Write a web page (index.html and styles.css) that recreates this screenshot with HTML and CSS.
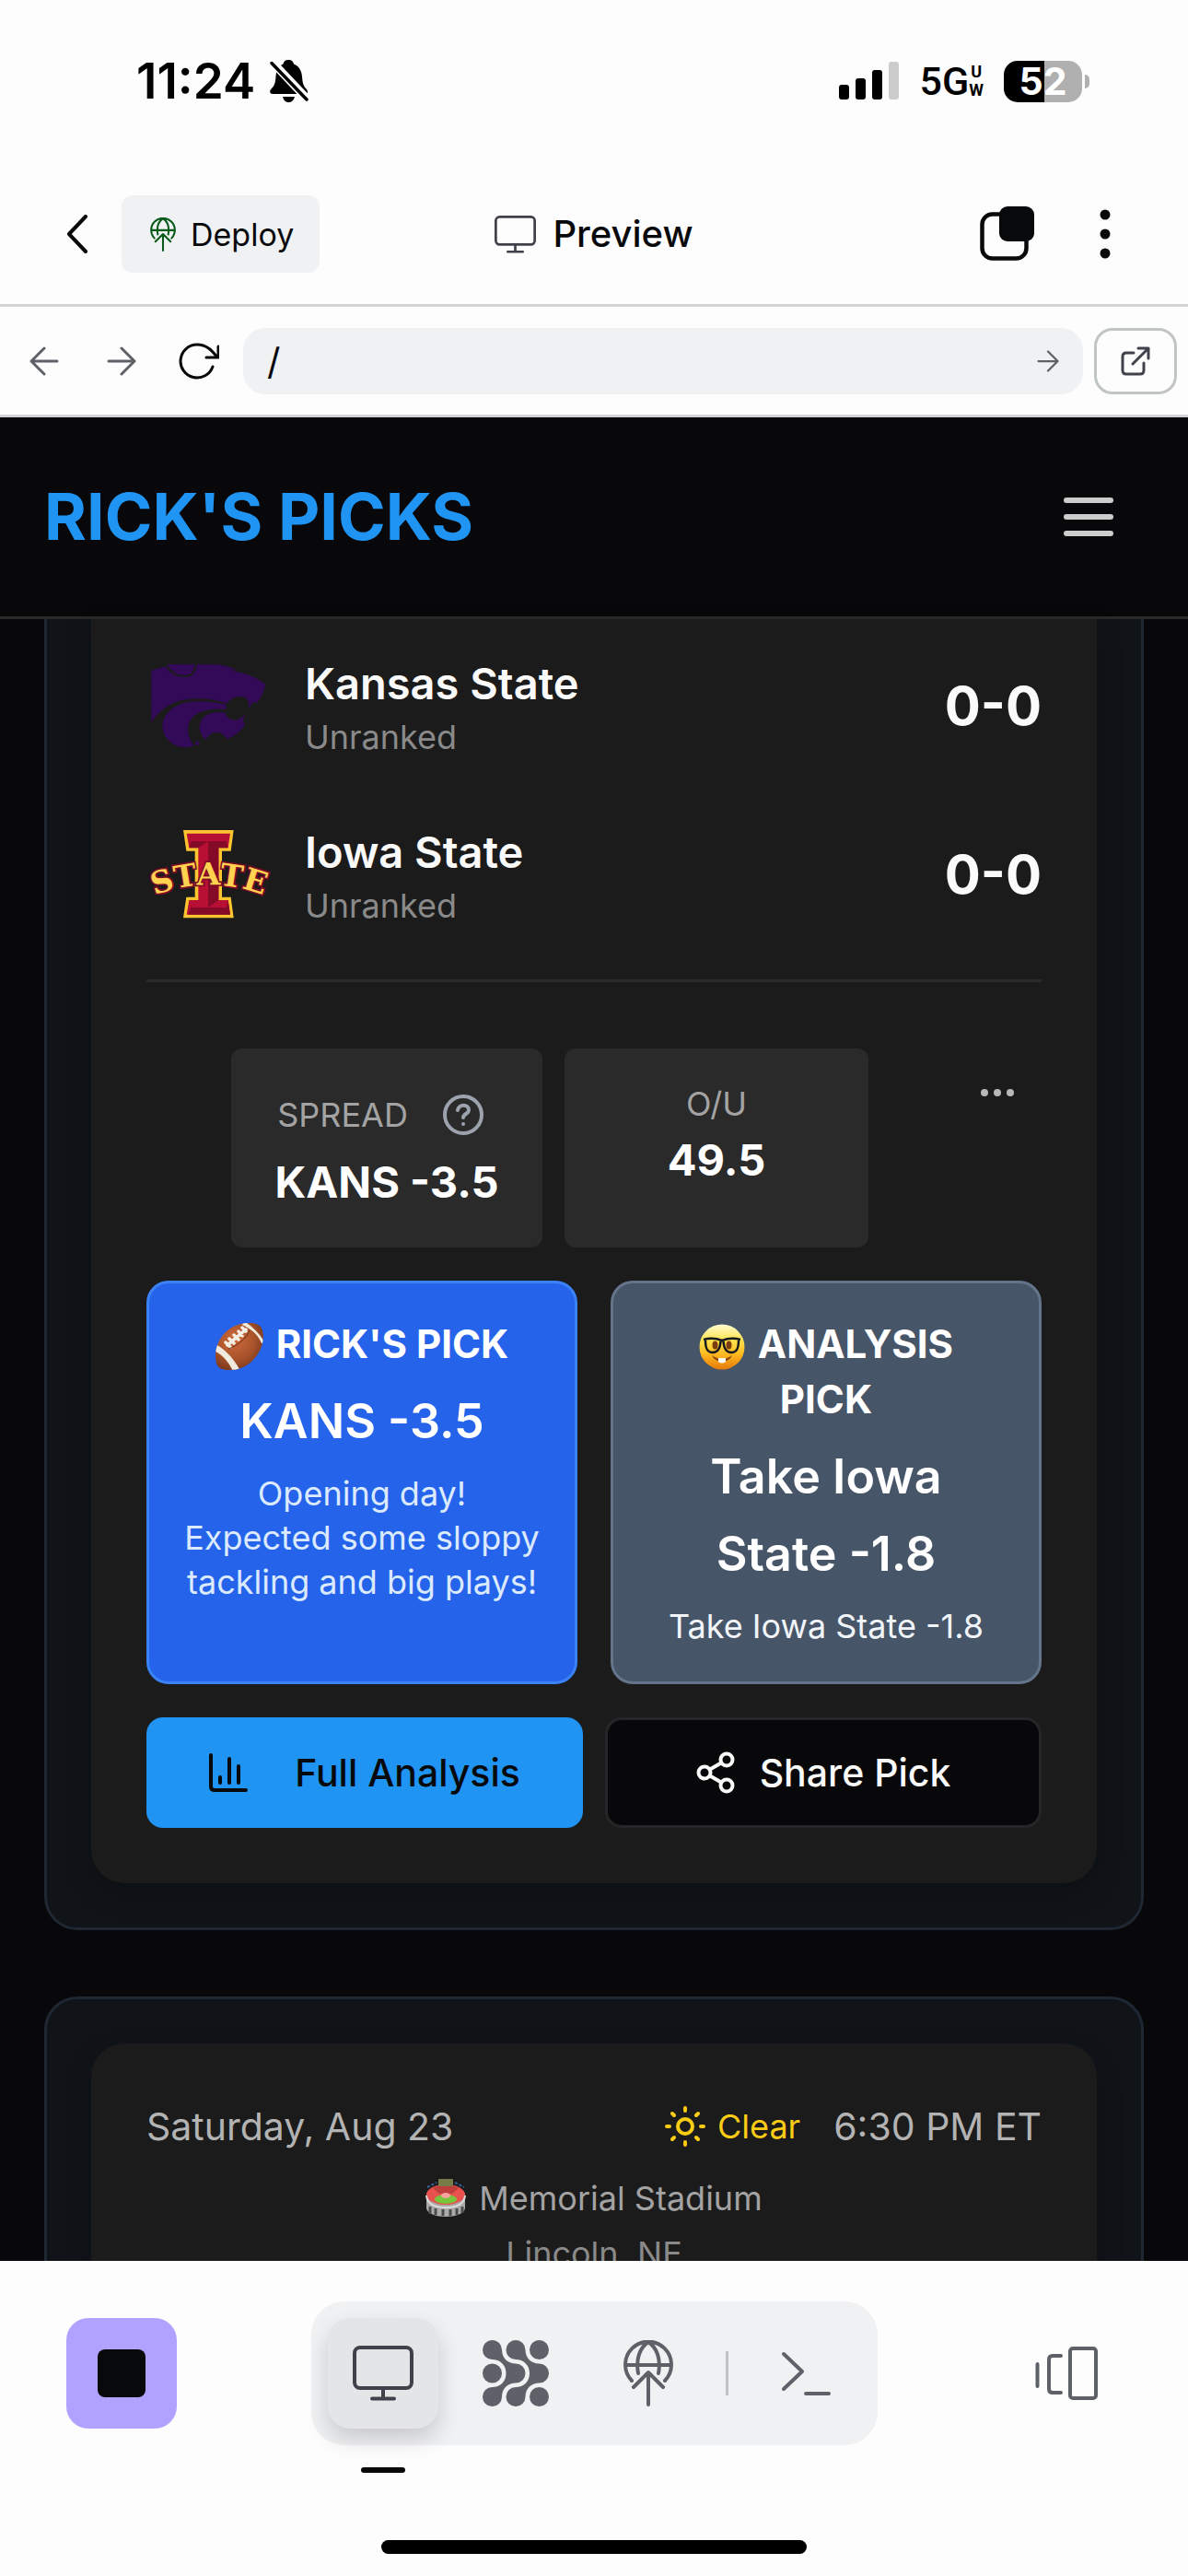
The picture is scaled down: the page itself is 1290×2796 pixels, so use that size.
FILE: index.html
```html
<!DOCTYPE html>
<html lang="en">
<head>
<meta charset="utf-8">
<meta name="viewport" content="width=device-width, initial-scale=1">
<title>Rick's Picks – Preview</title>
<link rel="stylesheet" href="styles.css">
</head>
<body>
<svg class="sprite" aria-hidden="true">
  <symbol id="i-publish" viewBox="0 0 54 72">
    <path d="M9 44A25 25 0 1 1 45 44M2 27H52M16 36C13 20 18 8 27 2C36 8 41 20 38 36M27 70V35M11 51L27 35L43 51"/>
  </symbol>
  <symbol id="i-monitor" viewBox="0 0 66 60">
    <rect x="2" y="2" width="62" height="44" rx="6"/><path d="M33 46V57M21 57.500H45"/>
  </symbol>
  <symbol id="i-arrow" viewBox="0 0 32 32">
    <path d="M2 16H30M16 2L30 16L16 30"/>
  </symbol>
</svg>

<div class="device">
  <header class="status">
    <div class="status-group">
      <span class="time">11:24</span>
      <svg class="bell" viewBox="0 0 42 46" width="42" height="46" aria-hidden="true">
        <path d="M20 0C24 0 25.500 2 26 4.500C32 7 34.500 12 35 18C35.500 26 37 29 40 32C42 35 41 37 38 37H3C0 37 -1 34 2 31C5 28 6 25 6.500 18C7 11 9 7 14.500 4.500C15 2 16.500 0 20 0ZM14 40H27C26 44 23.500 46 20.500 46C17 46 15 44 14 40Z" fill="#000"/>
        <path d="M5 1L43 41" stroke="#fdfdfd" stroke-width="3.500"/>
        <path d="M2 3L40 43" stroke="#fdfdfd" stroke-width="7"/>
        <path d="M2 3.500L40 43" stroke="#000" stroke-width="3.500" stroke-linecap="round"/>
      </svg>
    </div>
    <div class="status-group status-right">
      <svg class="signal" viewBox="0 0 66 42" width="66" height="42" aria-hidden="true">
        <rect y="25" width="11" height="16" rx="3"/><rect x="18" y="18" width="11" height="23" rx="3"/>
        <rect x="36" y="9" width="11" height="32" rx="3"/><rect x="54" width="11" height="41" rx="3" fill="#ccc"/>
      </svg>
      <span class="network"><span>5G</span><span class="network-sub"><span>U</span><span>W</span></span></span>
      <span class="battery"><span class="battery-body">52</span><span class="battery-tip"></span></span>
    </div>
  </header>

  <nav class="topnav">
    <div class="topnav-side">
      <button class="bare" aria-label="Back">
        <svg class="line ink" viewBox="0 0 24 42" width="24" height="42" stroke-width="4"><path d="M21 2L3 21L21 40"/></svg>
      </button>
      <button class="deploy"><svg class="line" width="28" height="37" stroke-width="4"><use href="#i-publish"/></svg>Deploy</button>
    </div>
    <h1 class="topnav-title"><svg class="line dim" width="45" height="41" stroke-width="4"><use href="#i-monitor"/></svg>Preview</h1>
    <div class="topnav-side topnav-right">
      <button class="bare" aria-label="Tabs">
        <svg viewBox="0 0 60 60" width="60" height="60"><rect x="2.500" y="8.500" width="48" height="48" rx="11" fill="none" stroke="#08090b" stroke-width="4.500"/><rect x="21" y="0" width="38" height="38" rx="9" fill="#08090b"/></svg>
      </button>
      <button class="bare" aria-label="More">
        <svg viewBox="0 0 12 54" width="12" height="54" fill="#08090b"><circle cx="6" cy="6" r="5.500"/><circle cx="6" cy="27" r="5.500"/><circle cx="6" cy="48" r="5.500"/></svg>
      </button>
    </div>
  </nav>

  <form class="urlbar">
    <button type="button" class="bare urlbar-btn" aria-label="Previous page"><svg class="line soft flip" width="32" height="32" stroke-width="3"><use href="#i-arrow"/></svg></button>
    <button type="button" class="bare urlbar-btn" aria-label="Next page"><svg class="line soft" width="32" height="32" stroke-width="3"><use href="#i-arrow"/></svg></button>
    <button type="button" class="bare urlbar-btn" aria-label="Reload"><svg class="line ink" viewBox="0 0 44 40" width="44" height="40" stroke-width="3"><path d="M42 16C36 8 30 2 20 2A18 18 0 1 0 37 26M43 4V16H30"/></svg></button>
    <div class="urlfield">
      <input type="text" value="/" aria-label="Address">
      <button type="button" class="bare" aria-label="Go"><svg class="line soft" width="24" height="24" stroke-width="3"><use href="#i-arrow"/></svg></button>
    </div>
    <button type="button" class="external" aria-label="Open in new tab"><svg class="line dim" viewBox="0 0 32 32" width="32" height="32" stroke-width="3"><path d="M14 7H6Q2 7 2 11V26Q2 30 6 30H21Q25 30 25 26V18M13 19L30 2M19 2H30V13"/></svg></button>
  </form>

  <div class="preview">
    <header class="app-header">
      <a class="brand" href="#">RICK'S PICKS</a>
      <button class="bare" aria-label="Menu"><span class="burger"><i></i><i></i><i></i></span></button>
    </header>

    <main class="feed">
      <article class="game game-clipped">
        <div class="game-body">
          <div class="teams">
            <div class="team">
              <svg viewBox="57 80 408 288" width="136" height="96" fill="#330a57" aria-label="Kansas State logo">
                <path d="M73 109L120 96C132 118 155 131 182 131C207 131 220 115 221 89L290 90Q328 96 352 109L326 108C375 116 418 132 446 155C440 176 430 198 418 214L405 212L389 232C392 212 388 196 366 194C345 193 328 204 318 217C260 195 195 197 150 213C115 228 90 250 73 280Z"/>
                <path d="M124 89H214C214 112 200 125 182 125C155 125 135 110 124 89Z"/>
                <path d="M316 221C260 207 200 205 165 220C125 237 109 265 109 290C110 330 145 360 185 360C195 360 205 358 212 354C198 335 190 315 193 295C197 255 235 230 316 236Z"/>
                <path d="M312 246C260 240 230 260 230 295C230 310 238 325 250 334C260 318 270 310 285 310C300 310 312 320 319 332C345 325 365 305 380 283L371 277L379 250C360 276 325 280 312 246Z"/>
                <circle cx="223" cy="346" r="7"/>
              </svg>
              <div class="team-text"><span class="team-name">Kansas State</span><span class="team-rank">Unranked</span></div>
              <span class="team-record">0-0</span>
            </div>
            <div class="team">
              <svg class="isu" viewBox="57 630 408 288" width="136" height="96" aria-label="Iowa State logo">
                <path d="M177 630H341L332 698H303V848H332L341 916H177L187 848H215V698H187Z" fill="#fdc52f"/>
                <path d="M188 641H330L323 688H292V858H323L330 905H188L196 858H226V688H196Z" fill="#b80f34"/>
                <path d="M202 666H317L323 688H292V858H323L330 905H193L201 882H258V666L226 688H196Z" fill="#850a28"/>
                <path d="M258 882L292 858H323L317 882Z" fill="#b80f34"/>
                <path id="arch" d="M60 852Q261 764 462 852" fill="none"/>
                <text class="isu-text" text-anchor="middle"><textPath href="#arch" startOffset="50%">STATE</textPath></text>
              </svg>
              <div class="team-text"><span class="team-name">Iowa State</span><span class="team-rank">Unranked</span></div>
              <span class="team-record">0-0</span>
            </div>
          </div>

          <div class="odds">
            <div class="odds-boxes">
              <div class="odd odd-spread">
                <div class="odd-label">SPREAD
                  <button class="bare" aria-label="What is the spread?"><svg class="line help" viewBox="0 0 44 44" width="44" height="44" stroke-width="4"><circle cx="22" cy="22" r="20"/><path d="M16 17C17 10 28 10 28 17C28 21 22 21 22 25M22 32V32.100"/></svg></button>
                </div>
                <div class="odd-value">KANS -3.5</div>
              </div>
              <div class="odd odd-total">
                <div class="odd-label">O/U</div>
                <div class="odd-value">49.5</div>
              </div>
            </div>
            <button class="bare more" aria-label="More odds"><svg viewBox="0 0 36 8" width="36" height="8" fill="#b8b8b8"><circle cx="4" cy="4" r="4"/><circle cx="18" cy="4" r="4"/><circle cx="32" cy="4" r="4"/></svg></button>
          </div>

          <div class="picks">
            <section class="pick pick-rick">
              <h2><svg class="emoji" viewBox="0 0 52 52" width="52" height="52" aria-hidden="true">
                <defs><radialGradient id="ball" cx=".4" cy=".35" r=".7"><stop offset="0" stop-color="#cd6a3b"/><stop offset=".6" stop-color="#a8522b"/><stop offset="1" stop-color="#74351a"/></radialGradient><clipPath id="ballclip"><path d="M33 0C40 -1 46 1 49 4C53 10 53 22 47 32C40 44 28 52 14 51C7 51 3 49 1 44C-2 32 2 20 9 12C16 4 25 1 33 0Z"/></clipPath></defs>
                <g clip-path="url(#ballclip)"><rect width="52" height="52" fill="url(#ball)"/><path d="M-2 22C10 28 20 38 28 54L20 55C16 44 8 34 -2 30ZM31 -2C40 4 48 11 54 22L50 22C46 12 38 6 29 2Z" fill="#f1ebdd"/></g>
                <path d="M13 24L33 7M11 21L16 26M15 17L20 22M20 13L25 18M25 9L29 14M29 5L33 9" stroke="#f3eee4" stroke-width="3.500" stroke-linecap="round"/>
                <path d="M14 28C24 24 33 18 37 8" fill="none" stroke="#6b3117"/>
              </svg> RICK'S PICK</h2>
              <p class="pick-line">KANS -3.5</p>
              <p class="pick-note">Opening day!<br>Expected some sloppy tackling and big plays!</p>
            </section>
            <section class="pick pick-analysis">
              <h2><svg class="emoji" viewBox="0 0 50 50" width="50" height="50" aria-hidden="true">
                <defs><linearGradient id="face" x2="0" y2="1"><stop offset="0" stop-color="#fffbd0"/><stop offset=".35" stop-color="#ffe44d"/><stop offset=".7" stop-color="#fdb21c"/><stop offset="1" stop-color="#e37a0b"/></linearGradient></defs>
                <circle cx="25" cy="25" r="24.500" fill="url(#face)"/>
                <ellipse cx="17.500" cy="23" rx="3" ry="4.500" fill="#7b3d0c"/><ellipse cx="32.500" cy="23" rx="3" ry="4.500" fill="#7b3d0c"/>
                <path d="M5 17Q15 14 25 18Q35 14 45 17M7 18C7 27 9 31 15 31C21 31 23 26 23.500 19M43 18C43 27 41 31 35 31C29 31 27 26 26.500 19" fill="none" stroke="#15181c" stroke-width="2.500"/>
                <path d="M14 34Q25 42 36 34Q33 41 25 41Q17 41 14 34Z" fill="#8b4310"/><path d="M21 37H29V41Q25 44 21 41Z" fill="#fff"/>
              </svg> ANALYSIS<br>PICK</h2>
              <p class="pick-line">Take Iowa<br>State -1.8</p>
              <p class="pick-note">Take Iowa State -1.8</p>
            </section>
          </div>

          <div class="actions">
            <button class="action action-primary"><svg class="line" viewBox="0 0 42 42" width="42" height="42" stroke-width="4"><path d="M2 2V36Q2 40 6 40H40M12 26V32M22 6V32M32 14V32"/></svg>Full Analysis</button>
            <button class="action action-secondary"><svg class="line" viewBox="0 0 42 46" width="42" height="46" stroke-width="4"><circle cx="33" cy="9" r="6.500"/><circle cx="9" cy="23" r="6.500"/><circle cx="33" cy="37" r="6.500"/><path d="M15 19.500L27 12.500M15 26.500L27 33.500"/></svg>Share Pick</button>
          </div>
        </div>
      </article>

      <article class="game">
        <div class="game-body">
          <div class="kickoff">
            <span>Saturday, Aug 23</span>
            <span class="kickoff-right">
              <span class="weather"><svg class="line" viewBox="0 0 46 46" width="46" height="46" stroke-width="4"><circle cx="23" cy="23" r="8"/><path d="M23 3V6M23 40V43M3 23H6M40 23H43M9 9L11 11M35 35L37 37M9 37L11 35M35 11L37 9"/></svg>Clear</span>
              <span>6:30 PM ET</span>
            </span>
          </div>
          <div class="venue">
            <span class="venue-name"><svg viewBox="0 0 44 42" width="44" height="42" aria-hidden="true">
              <path d="M1 17V32C2 38 12 41 22 41C32 41 42 38 43 32V17Z" fill="#aaa"/><path d="M5 30V38M11 32V39M19 33V40M27 33V40M34 32V39M40 30V37" stroke="#4c4c50" stroke-width="3"/>
              <ellipse cx="22" cy="17" rx="21" ry="11" fill="#e8514d"/><path d="M8 10Q22 2 36 10L29 16H15Z" fill="#bf3d3a"/><ellipse cx="22" cy="22" rx="12" ry="5" fill="#78c43a"/><ellipse cx="22" cy="18" rx="5" ry="3" fill="#f8a3a0"/>
              <path d="M1 18C2 29 12 31 22 31C32 31 42 29 43 18" fill="none" stroke="#ddd" stroke-width="2"/><rect x="14" y="0" width="16" height="8" rx="1" fill="#777b48"/><path d="M2 9L12 4M32 4L42 9" stroke="#34639a" stroke-width="2" stroke-dasharray="3 2"/>
            </svg>Memorial Stadium</span>
            <span class="venue-city">Lincoln, NE</span>
          </div>
        </div>
      </article>
    </main>
  </div>

  <footer class="dock">
    <div class="dock-row">
      <button class="stop" aria-label="Stop"><span class="stop-mark"></span></button>
      <div class="tabs">
        <button class="tab tab-active" aria-label="Preview"><svg class="line dim" width="66" height="60" stroke-width="4"><use href="#i-monitor"/></svg></button>
        <button class="tab" aria-label="Agent"><svg viewBox="0 0 72 72" width="72" height="72" fill="#5f6169"><path id="chain" d="M10.500 0A10.500 10.500 0 0 1 21 10.500C21 19 27 25.500 36 25.500A10.500 10.500 0 0 1 36 46.500C27 46.500 21 53 21 61.500A10.500 10.500 0 1 1 10.500 51C19 51 25.500 45 25.500 36C25.500 27 19 21 10.500 21A10.500 10.500 0 0 1 10.500 0Z"/><use href="#chain" x="25.500"/><circle cx="61.500" cy="10.500" r="10.500"/><circle cx="10.500" cy="36" r="10.500"/><circle cx="61.500" cy="61.500" r="10.500"/></svg></button>
        <button class="tab" aria-label="Deployments"><svg class="line soft" width="54" height="72" stroke-width="4"><use href="#i-publish"/></svg></button>
        <span class="tabs-rule"></span>
        <button class="tab" aria-label="Console"><svg class="line soft" viewBox="0 0 54 50" width="54" height="50" stroke-width="4"><path d="M3 4L23 23L3 42M27 47H52"/></svg></button>
      </div>
      <button class="bare panes" aria-label="Switch panes"><svg class="line soft" viewBox="0 0 68 60" width="68" height="60" stroke-width="4"><path d="M2.500 20V44M28 11H19Q15 11 15 15V47Q15 51 19 51H28"/><rect x="38" y="3" width="28" height="54" rx="3"/></svg></button>
    </div>
    <span class="home-bar"></span>
  </footer>
</div>
</body>
</html>
```
FILE: styles.css
```css
* { box-sizing: border-box; }
html, body { height: 100%; }
body {
  margin: 0;
  background: #fdfdfd;
  color: #08090b;
  font-family: Inter, "Liberation Sans", sans-serif;
  font-size: 36px;
}
h1, h2, p { margin: 0; }
button { font: inherit; color: inherit; cursor: pointer; }
svg { display: block; flex: none; }
.sprite { position: absolute; width: 0; height: 0; }
.bare { display: flex; align-items: center; justify-content: center; padding: 0; border: 0; background: none; }
.line { fill: none; stroke: currentColor; stroke-linecap: round; stroke-linejoin: round; }
.ink { color: #08090b; }
.dim { color: #40424b; }
.soft { color: #5f6169; }
.help { color: #9ca3af; }
.flip { transform: rotate(180deg); }

.device { display: flex; flex-direction: column; height: 100vh; }

/* Phone status bar */
.status {
  display: flex;
  justify-content: space-between;
  align-items: center;
  padding: 58px 107px 60px 148px;
  line-height: 60px;
  color: #000;
}
.status-group { display: flex; align-items: center; gap: 16px; }
.status-right { gap: 22px; }
.time { font-size: 53px; font-weight: 600; }
.network { display: flex; align-items: center; font-family: Roboto, sans-serif; font-size: 43px; font-weight: 500; }
.network-sub { display: flex; flex-direction: column; font-size: 18px; font-weight: 700; line-height: 20px; text-align: center; }
.battery { display: flex; align-items: center; gap: 3px; }
.battery-body {
  width: 85px;
  border-radius: 15px;
  background: linear-gradient(90deg, #000 52%, #b0b0b0 52%);
  color: #fff;
  font-size: 41px;
  font-weight: 700;
  line-height: 45px;
  text-align: center;
}
.battery-tip { width: 5px; height: 15px; border-radius: 0 5px 5px 0; background: #b0b0b0; }

/* Workspace navigation */
.topnav {
  display: grid;
  grid-template-columns: 1fr auto 1fr;
  align-items: center;
  padding: 34px 84px 34px 72px;
  border-bottom: 3px solid #d3d4d5;
}
.topnav-side { display: flex; align-items: center; gap: 36px; }
.topnav-right { justify-content: flex-end; gap: 70px; }
.topnav-title { display: flex; align-items: center; gap: 18px; padding-left: 12px; font-size: 40px; font-weight: 500; line-height: 48px; }
.deploy {
  display: flex;
  align-items: center;
  gap: 16px;
  height: 84px;
  padding: 0 28px 0 31px;
  border: 0;
  border-radius: 12px;
  background: #f0f1f3;
  font-size: 34px;
}
.deploy .line { color: #0a5a1a; }

.urlbar {
  display: flex;
  align-items: center;
  padding: 23px 12px 22px 6px;
  border-bottom: 3px solid #d3d4d5;
}
.urlbar-btn { width: 84px; height: 72px; }
.urlfield {
  display: flex;
  flex: 1;
  align-items: center;
  height: 72px;
  margin: 0 12px 0 6px;
  padding: 0 26px;
  border-radius: 24px;
  background: #f0f1f3;
}
.urlfield input { flex: 1; min-width: 0; padding: 0; border: 0; background: none; color: inherit; font: inherit; font-size: 40px; outline: 0; }
.external {
  display: flex;
  align-items: center;
  justify-content: center;
  width: 90px;
  height: 72px;
  padding: 0;
  border: 3px solid #c0c4c5;
  border-radius: 20px;
  background: none;
}

/* Previewed app */
.preview { flex: 1; min-height: 0; overflow: hidden; background: #08080a; color: #fafafa; }
.app-header {
  display: flex;
  align-items: center;
  justify-content: space-between;
  padding: 60px 81px 60px 48px;
  border-bottom: 3px solid #2a2a2a;
}
.brand { color: #2094f3; font-size: 70px; font-weight: 700; line-height: 96px; text-decoration: none; }
.burger { display: grid; gap: 12px; width: 54px; }
.burger i { height: 6px; border-radius: 3px; background: #ccc; }

.feed { display: flex; flex-direction: column; gap: 72px; padding: 0 48px; }
.game { padding: 48px; border: 3px solid #1f2733; border-radius: 36px; background: #101318; }
.game-body { padding: 60px; border-radius: 36px; background: #1b1b1b; box-shadow: 0 12px 30px rgba(0, 0, 0, .2); }
.game-clipped { padding-top: 0; border-top: 0; border-radius: 0 0 36px 36px; }
.game-clipped .game-body { padding-top: 35px; border-radius: 0 0 36px 36px; }

.teams { display: grid; gap: 66px; padding-bottom: 56px; border-bottom: 3px solid #2a2a2a; }
.team { display: flex; align-items: center; gap: 36px; }
.team-text { display: flex; flex: 1; flex-direction: column; }
.team-name { font-size: 47px; font-weight: 600; line-height: 69px; }
.team-rank { color: #8a8a8a; line-height: 48px; }
.team-record { font-size: 58px; font-weight: 700; }
.isu { overflow: visible; }
.isu-text { font: 700 100px "DejaVu Serif", serif; fill: #ffd24f; stroke: #7c0b28; stroke-width: 10px; paint-order: stroke; }

.odds { display: flex; align-items: flex-start; padding: 72px 0 36px; }
.odds-boxes { display: flex; flex: 1; justify-content: center; gap: 24px; }
.odd { padding: 36px 24px 34px; border-radius: 12px; background: #2a2a2a; text-align: center; }
.odd-spread { width: 338px; }
.odd-total { width: 330px; }
.odd-label { display: flex; align-items: center; justify-content: center; gap: 38px; color: #a3a3a3; line-height: 48px; }
.odd-spread .odd-label { padding-right: 14px; line-height: 72px; }
.odd-value { color: #fff; font-size: 47px; font-weight: 700; line-height: 74px; }
.more { width: 96px; height: 96px; }

.picks { display: grid; grid-template-columns: 1fr 1fr; gap: 36px; }
.pick { padding: 36px 33px; border: 3px solid; border-radius: 24px; color: #fff; text-align: center; }
.pick-rick { border-color: #3b82f6; background: #2563eb; }
.pick-analysis { border-color: #64748b; background: #475569; }
.pick h2 { font-size: 42px; font-weight: 700; line-height: 60px; }
.emoji { display: inline-block; margin: -6px 4px -4px 0; vertical-align: middle; }
.pick-line { margin-top: 12px; font-size: 52px; font-weight: 600; line-height: 84px; }
.pick-note { margin-top: 12px; line-height: 48px; }
.pick-rick .pick-note { color: #dbeafe; }
.pick-analysis .pick-note { color: #f1f5f9; }

.actions { display: grid; grid-template-columns: 1fr 1fr; gap: 24px; padding-top: 36px; }
.action { display: flex; align-items: center; justify-content: center; height: 120px; padding: 0; border: 3px solid; border-radius: 18px; font-size: 41px; font-weight: 500; }
.action-primary { gap: 51px; border-color: #2094f3; background: #2094f3; color: #08090b; }
.action-secondary { gap: 27px; border-color: #262628; background: #08080a; color: #fafafa; }

.kickoff { display: flex; justify-content: space-between; color: #b3b3b3; font-size: 41px; line-height: 60px; }
.kickoff-right { display: flex; gap: 36px; }
.weather { display: flex; align-items: center; gap: 12px; color: #facc15; font-size: 36px; }
.venue { display: flex; flex-direction: column; align-items: center; padding-top: 18px; line-height: 60px; }
.venue-name { display: flex; align-items: center; gap: 14px; color: #a3a3a3; }
.venue-city { color: #8a8a8a; }

/* Bottom dock */
.dock { display: flex; flex-direction: column; padding: 44px 0 24px; background: #fdfdfd; }
.dock-row { display: grid; grid-template-columns: 1fr auto 1fr; align-items: center; }
.stop { display: flex; align-items: center; justify-content: center; width: 120px; height: 120px; margin-left: 72px; padding: 0; border: 0; border-radius: 24px; background: #b2a2ff; }
.stop-mark { width: 52px; height: 52px; border-radius: 8px; background: #08090b; }
.panes { justify-self: end; margin-right: 98px; }
.tabs { display: flex; align-items: center; gap: 24px; padding: 18px; border-radius: 36px; background: #f0f1f3; }
.tab { position: relative; display: flex; align-items: center; justify-content: center; width: 120px; height: 120px; padding: 0; border: 0; border-radius: 24px; background: none; }
.tab-active { background: #e4e5e6; box-shadow: 0 12px 24px rgba(0, 0, 0, .16); }
.tab-active::after { content: ""; position: absolute; bottom: -48px; left: 36px; width: 48px; height: 6px; border-radius: 3px; background: #08090b; }
.tabs-rule { width: 3px; height: 48px; background: #c0c2c4; }
.home-bar { align-self: center; width: 462px; height: 15px; margin-top: 103px; border-radius: 8px; background: #000; }
```
